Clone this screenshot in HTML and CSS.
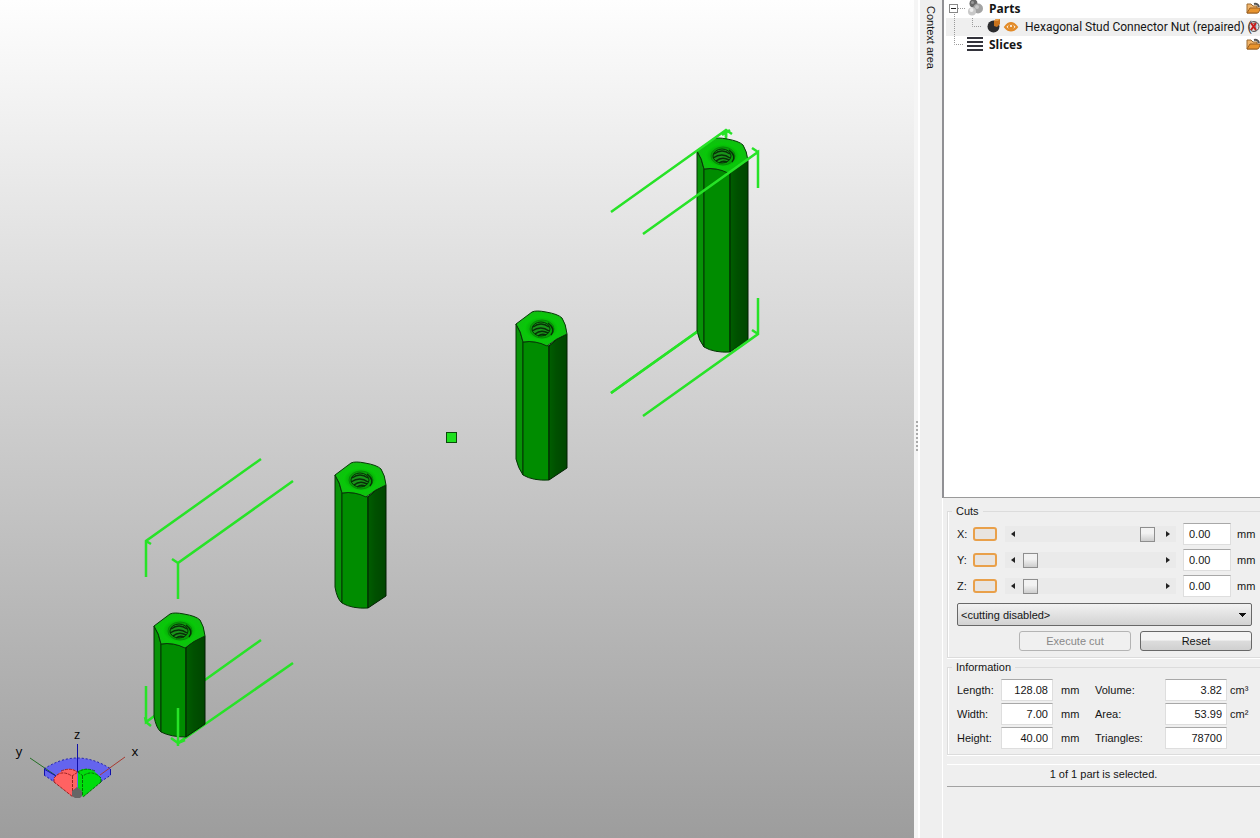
FILE: index.html
```html
<!DOCTYPE html>
<html lang="en">
<head>
<meta charset="utf-8">
<meta name="viewport" content="width=device-width, initial-scale=1">
<title>Part viewer</title>
<link rel="stylesheet" href="styles.css">
</head>
<body>
<main class="app">
  <section class="viewport" aria-label="3D view">
    <svg class="scene" viewBox="0 0 914 838" preserveAspectRatio="xMinYMin meet" role="img" aria-label="Four hexagonal stud connector nuts">
      <defs>
        <radialGradient id="capFill"><stop offset="0.2" stop-color="#058f05"/><stop offset="0.65" stop-color="#08c808"/><stop offset="1" stop-color="#12bd12"/></radialGradient>
        <linearGradient id="rightFace"><stop offset="0" stop-color="#005e00"/><stop offset="0.4" stop-color="#005000"/><stop offset="1" stop-color="#004600"/></linearGradient>
        <g id="cap">
          <path class="cap-face" d="M0 13L16 1Q20 -1 30 1Q42 3 46 7Q50 13 51 23Q39 28 31 35Q19 29 7 31Q5 20 0 13Z"/>
          <ellipse class="hole-rim" cx="26" cy="18" rx="12" ry="9"/>
          <ellipse class="hole" cx="25" cy="18" rx="9" ry="7"/>
          <path class="thread" d="M17 16Q25 10 33 16M16 20Q25 14 33 20M19 23Q25 18 32 22M22 25Q26 22 30 24M32 12Q40 18 35 24"/>
        </g>
      </defs>

      <g class="bounds">
        <path d="M261 459L146 541V577M146 541L151 544M293 481L178 563V599M178 563L172 559"/>
        <path d="M146 686V722L261 640M146 722L151 726M146 722L145 717"/>
        <path d="M178 743L293 663M611 393L726 311M726 130V142"/>
      </g>

      <g class="stud">
        <path class="face-left" d="M154 626Q159 634 161 644V732Q156 728 154 716Z"/>
        <path class="face-front" d="M161 644Q173 642 186 648V737Q171 737 161 732Z"/>
        <path class="face-right" d="M186 648Q193 640 205 636V724L186 737Z"/>
        <use href="#cap" x="154" y="613"/>
      </g>
      <g class="stud">
        <path class="face-left" d="M335 475Q340 483 342 493V603Q337 599 335 587Z"/>
        <path class="face-front" d="M342 493Q355 491 368 497V608Q352 609 342 603Z"/>
        <path class="face-right" d="M368 497Q375 489 386 485V596L368 608Z"/>
        <use href="#cap" x="335" y="462"/>
      </g>
      <g class="stud">
        <path class="face-left" d="M516 324Q521 332 523 342V475Q518 468 516 459Z"/>
        <path class="face-front" d="M523 342Q536 340 549 346V480Q533 481 523 475Z"/>
        <path class="face-right" d="M549 346Q556 338 567 334V468L549 480Z"/>
        <use href="#cap" x="516" y="311"/>
      </g>
      <g class="stud">
        <path class="face-left" d="M697 151Q702 159 704 169V347Q699 341 697 331Z"/>
        <path class="face-front" d="M704 169Q717 167 730 173V352Q714 353 704 347Z"/>
        <path class="face-right" d="M730 173Q737 165 748 161V340L730 352Z"/>
        <use href="#cap" x="697" y="138"/>
      </g>

      <g class="bounds">
        <path d="M178 708V743M171 738L178 743L185 740M178 743V746"/>
        <path d="M611 212L726 130L732 134M722 135L730 130M726 130V137M643 234L758 152V188M758 152L752 148"/>
        <path d="M758 298V334L643 416M758 334L752 330M611 393L697 332"/>
      </g>
      <rect class="center-mark" x="446.500" y="432.500" width="10" height="10"/>

      <g class="axes">
        <path class="axis-blue-fill" d="M44 769Q77 747 111 769V775L77 797L44 775Z"/>
        <path class="axis-line-y" d="M30 758L55 775"/>
        <path class="axis-line-x" d="M125 757L100 775"/>
        <path class="axis-blue-edge" d="M44 769Q77 747 111 769M44 775L77 797L111 775"/>
        <path class="axis-red-fill" d="M54 782V778Q66 764 77 771V790L73 797Z"/>
        <path class="axis-green-fill" d="M101 782V778Q90 764 78 771V790L83 797Z"/>
        <path class="axis-red-edge" d="M54 782V778Q61 769 72 776L78 772M61 771Q71 767 77 772M72.500 776V795M54 782L73 797"/>
        <path class="axis-green-edge" d="M101 782V778Q92 769 83 776L78 772M95 771Q86 767 78 772M82.500 776V795M101 782L83 797"/>
        <path class="axis-line-z" d="M44.500 769V775M110.500 769V775M44 769L56 776M77.500 744V772"/>
        <path class="axis-origin" d="M77 787L82 791V796L80 798H75L72 796V791Z"/>
      </g>
      <g class="axis-names">
        <text x="19" y="756">y</text>
        <text x="77" y="739">z</text>
        <text x="135" y="756">x</text>
      </g>
    </svg>
  </section>

  <aside class="context-strip">
    <div class="splitter"><span class="grip"></span></div>
    <span class="context-label">Context area</span>
  </aside>

  <section class="side">
    <ul class="tree">
      <li class="tree-row">
        <svg class="tree-lines" width="23" height="18" viewBox="0 0 23 18" aria-hidden="true"><path class="dots" d="M14 8.500H21M10.500 14V18"/><rect x="5.500" y="4.500" width="8" height="8" fill="#fff" stroke="#888"/><path d="M7 8.500H12" stroke="#222"/></svg>
        <svg width="18" height="18" viewBox="0 0 18 18" aria-hidden="true"><circle cx="6.500" cy="3.500" r="4" fill="#686868"/><circle cx="11" cy="8.500" r="5" fill="#a4a4a4"/><circle cx="5" cy="11.500" r="4" fill="#c8c8c8"/><circle cx="4.500" cy="10" r="2" fill="#eee"/><circle cx="10" cy="7" r="2" fill="#c8c8c8"/><circle cx="5.500" cy="2.500" r="1.500" fill="#999"/></svg>
        <span class="tree-name tree-group">Parts</span>
        <svg class="tree-end" width="14" height="18" viewBox="0 0 14 18" aria-hidden="true"><use href="#folder"/></svg>
      </li>
      <li class="tree-row tree-selected">
        <svg class="tree-lines" width="43" height="18" viewBox="0 0 43 18" aria-hidden="true"><path class="dots" d="M10.500 0V18M28.500 0V8.500H37"/></svg>
        <svg width="16" height="18" viewBox="0 0 16 18" aria-hidden="true"><circle cx="6.500" cy="8.500" r="6" fill="#2c2c2e"/><path d="M7 8V3L9 1H13V6L10 9Z" fill="#c9731c"/><path d="M7 3L9 1H13L11 3Z" fill="#e69a45"/></svg>
        <svg width="16" height="18" viewBox="0 0 16 18" aria-hidden="true"><path d="M2 9Q8 1 14 9Q8 16 2 9Z" fill="#fff2df" stroke="#e28a28" stroke-width="2"/><circle cx="8" cy="9" r="3" fill="#e28a28"/><circle cx="8" cy="8" r="1" fill="#fff"/></svg>
        <span class="tree-name part-name">Hexagonal Stud Connector Nut (repaired) (1</span>
        <svg class="tree-end" width="14" height="18" viewBox="0 0 14 18" aria-hidden="true"><circle cx="8" cy="8.500" r="5" fill="#c9c5c5" fill-opacity="0.5" stroke="#555"/><path d="M5 5L10 12M10 5L5 12" stroke="#c91c1c" stroke-width="2"/></svg>
      </li>
      <li class="tree-row">
        <svg class="tree-lines" width="23" height="18" viewBox="0 0 23 18" aria-hidden="true"><path class="dots" d="M10.500 0V8.500H20"/></svg>
        <svg width="18" height="18" viewBox="0 0 18 18" aria-hidden="true"><path d="M0 2H16M0 6H16M0 10H16M0 14H16" stroke="#33333b" stroke-width="2"/></svg>
        <span class="tree-name tree-group">Slices</span>
        <svg class="tree-end" width="14" height="18" viewBox="0 0 14 18" aria-hidden="true"><g id="folder"><path d="M1 4H5L7 6H11V13H1Z" fill="#f0b46a" stroke="#9b6a30"/><path d="M1 13L4 8H14V10L12 13Z" fill="#e8942e" stroke="#9b5f20"/><path d="M8 4Q12 3 13 7" fill="none" stroke="#555" stroke-width="2"/></g></svg>
      </li>
    </ul>

    <div class="panels">
      <fieldset class="group cuts">
        <legend>Cuts</legend>
        <div class="cut-row">
          <label for="cut-x">X:</label>
          <button class="swatch" type="button" aria-label="X cut colour"></button>
          <div class="scroller"><button class="arrow arrow-left" type="button" aria-label="Decrease X"></button><input class="range" type="range" min="0" max="100" value="100" aria-label="X position"><button class="arrow arrow-right" type="button" aria-label="Increase X"></button></div>
          <input class="field" id="cut-x" type="text" value="0.00"><span class="unit">mm</span>
        </div>
        <div class="cut-row">
          <label for="cut-y">Y:</label>
          <button class="swatch" type="button" aria-label="Y cut colour"></button>
          <div class="scroller"><button class="arrow arrow-left" type="button" aria-label="Decrease Y"></button><input class="range" type="range" min="0" max="100" value="0" aria-label="Y position"><button class="arrow arrow-right" type="button" aria-label="Increase Y"></button></div>
          <input class="field" id="cut-y" type="text" value="0.00"><span class="unit">mm</span>
        </div>
        <div class="cut-row">
          <label for="cut-z">Z:</label>
          <button class="swatch" type="button" aria-label="Z cut colour"></button>
          <div class="scroller"><button class="arrow arrow-left" type="button" aria-label="Decrease Z"></button><input class="range" type="range" min="0" max="100" value="0" aria-label="Z position"><button class="arrow arrow-right" type="button" aria-label="Increase Z"></button></div>
          <input class="field" id="cut-z" type="text" value="0.00"><span class="unit">mm</span>
        </div>
        <select class="cut-mode" aria-label="Cutting mode"><option>&lt;cutting disabled&gt;</option></select>
        <div class="actions">
          <button class="push" type="button" disabled>Execute cut</button>
          <button class="push" type="button">Reset</button>
        </div>
      </fieldset>

      <fieldset class="group info">
        <legend>Information</legend>
        <div class="info-grid">
          <label for="length">Length:</label><input class="field number" id="length" type="text" value="128.08" readonly><span class="unit">mm</span>
          <label for="volume">Volume:</label><input class="field number" id="volume" type="text" value="3.82" readonly><span class="unit-end">cm³</span>
          <label for="width">Width:</label><input class="field number" id="width" type="text" value="7.00" readonly><span class="unit">mm</span>
          <label for="area">Area:</label><input class="field number" id="area" type="text" value="53.99" readonly><span class="unit-end">cm²</span>
          <label for="height">Height:</label><input class="field number" id="height" type="text" value="40.00" readonly><span class="unit">mm</span>
          <label for="triangles">Triangles:</label><input class="field number" id="triangles" type="text" value="78700" readonly>
        </div>
      </fieldset>

      <p class="status">1 of 1 part is selected.</p>
    </div>
  </section>
</main>
</body>
</html>
```
FILE: styles.css
```css
* { box-sizing: border-box; }

body {
  margin: 0;
  background: #efefef;
  color: #151515;
  font: 11px/14px "Liberation Sans", Arial, sans-serif;
}

button, input, select { font: inherit; color: inherit; margin: 0; }

.app {
  display: grid;
  grid-template-columns: minmax(0, 1fr) 28px 318px;
  min-height: 100vh;
}

/* 3D view */
.viewport { background: linear-gradient(#fefefe, #9d9d9d); }
.scene { display: block; width: 100%; }
.bounds path { fill: none; stroke: #27e327; stroke-width: 2.5; }
.cap-face { fill: url(#capFill); stroke: #073a07; }
.hole-rim { fill: #069f06; stroke: #078807; }
.hole { fill: #1a941a; stroke: #053005; }
.thread { fill: none; stroke: #082f08; stroke-width: 1.5; }
.stud path { stroke-linejoin: round; }
.face-left { fill: #079307; stroke: #053405; }
.face-front { fill: #008c00; stroke: #053405; }
.face-right { fill: url(#rightFace); stroke: #021f02; }
.center-mark { fill: #1ee01e; stroke: #0a4a0a; }
.axes path { fill: none; }
.axes .axis-blue-fill { fill: #6464ee; }
.axes .axis-red-fill { fill: #ff6262; }
.axes .axis-green-fill { fill: #00dd0c; }
.axes .axis-origin { fill: #666; }
.axis-blue-edge { stroke: #1818b0; stroke-dasharray: 2 2; }
.axis-line-z { stroke: #1010a8; }
.axis-line-y { stroke: #247024; }
.axis-line-x { stroke: #a83a30; }
.axis-red-edge { stroke: #9a2020; stroke-dasharray: 3 1; }
.axis-green-edge { stroke: #057005; stroke-dasharray: 3 1; }
.axis-names { font: 13px "Open Sans", sans-serif; text-anchor: middle; }

/* Splitter and tab */
.context-strip { display: flex; background: #efefef; }
.splitter {
  display: flex;
  align-items: center;
  width: 6px;
  padding-top: 34px;
  background: #f5f5f5;
  border-right: 2px solid #fff;
}
.grip {
  width: 2px;
  height: 30px;
  margin-left: 2px;
  background: repeating-linear-gradient(#aaa 0 2px, #f5f5f5 2px 4px);
}
.context-label {
  align-self: flex-start;
  padding: 6px 4px;
  writing-mode: vertical-rl;
}

/* Tree */
.side {
  display: flex;
  flex-direction: column;
  min-width: 0;
  overflow: hidden;
}
.tree {
  height: 498px;
  margin: 0;
  padding: 0;
  list-style: none;
  background: #fff;
  border-left: 2px solid #909094;
  border-bottom: 1px solid #9a9a9a;
  font: 12px/18px "Open Sans", "Noto Sans", sans-serif;
}
.tree-row {
  position: relative;
  display: flex;
  height: 18px;
}
.tree-row svg { flex: none; }
.tree-selected { background: linear-gradient(90deg, #fff 0 2px, #efefef 2px); }
.tree-name { margin-left: 4px; white-space: nowrap; }
.tree-group { font-weight: 700; }
.part-name { margin-left: 6px; font-family: Roboto, sans-serif; }
.tree-end { position: absolute; right: 0; top: 0; }
.dots { fill: none; stroke: #999; stroke-dasharray: 1 1; }

/* Panels */
.panels {
  flex: 1;
  padding: 6px 0 0 4px;
  border-left: 1px solid #fff;
}
.group {
  min-width: 0;
  margin: 0;
  border: 1px solid #dcdcdc;
  border-right: 0;
  box-shadow: inset 1px 0 #fff, 0 1px #fff;
}
.group legend { margin-left: -5px; padding: 0 4px; }
.cuts { padding: 3px 0 6px 9px; }
.info { padding: 4px 0 4px 9px; margin-top: 2px; }

.cut-row {
  display: grid;
  grid-template-columns: 16px 24px minmax(0, 1fr) 48px 29px;
  align-items: center;
  height: 26px;
}
.swatch {
  height: 14px;
  padding: 0;
  background: #e8e4e0;
  border: 2px solid #e9a04a;
  border-radius: 3px;
}
.scroller {
  display: flex;
  align-items: center;
  height: 16px;
  margin: 0 7px 0 8px;
  background: #eaeaea;
}
.arrow {
  display: flex;
  justify-content: center;
  align-items: center;
  width: 16px;
  height: 16px;
  padding: 0;
  background: none;
  border: 0;
}
.arrow::before { content: ""; border: 3px solid transparent; }
.arrow-left::before { border-right: 4px solid #222; border-left: 0; }
.arrow-right::before { border-left: 4px solid #222; border-right: 0; }
.range {
  flex: 1;
  min-width: 0;
  height: 16px;
  margin: 0 5px 0 2px;
  background: none;
  appearance: none;
}
.range::-webkit-slider-thumb {
  appearance: none;
  width: 15px;
  height: 15px;
  background: linear-gradient(#f2f2f2 40%, #cdcdcd);
  border: 1px solid #8e8e8e;
}
.field {
  width: 100%;
  min-width: 0;
  height: 22px;
  padding: 0 5px;
  background: #fff;
  border: 1px solid #dedede;
  border-top-color: #a8a8a8;
}
.unit { padding-left: 6px; }

.cut-mode {
  display: block;
  width: calc(100% - 8px);
  height: 23px;
  margin: 4px 0 0;
  padding: 0 3px;
  appearance: none;
  background:
    linear-gradient(135deg, #111 50%, transparent 50%) right 4px center / 4px 4px no-repeat,
    linear-gradient(225deg, #111 50%, transparent 50%) right 8px center / 4px 4px no-repeat,
    linear-gradient(#f2f2f2, #d2d2d2);
  border: 1px solid #686868;
  border-radius: 2px;
}
.actions {
  display: flex;
  justify-content: flex-end;
  gap: 9px;
  margin: 5px 8px 0 0;
}
.push {
  width: 112px;
  height: 20px;
  padding: 0;
  background: linear-gradient(#f4f4f4 45%, #dcdcdc 50%, #d0d0d0);
  border: 1px solid #686868;
  border-radius: 3px;
}
.push:disabled { background: #f0f0f0; border-color: #b4b4b4; color: #888; }

.info-grid {
  display: grid;
  grid-template-columns: 44px 52px 42px 70px 62px minmax(0, 1fr);
  grid-auto-rows: 24px;
  align-items: center;
}
.number { text-align: right; padding: 0 4px; }
.info .unit { padding-left: 8px; }
.unit-end { padding-left: 3px; }

.status {
  margin: 9px 0 0;
  padding: 2px 0 5px;
  border-top: 1px solid #fff;
  border-bottom: 1px solid #a2a2a2;
  text-align: center;
}
```
